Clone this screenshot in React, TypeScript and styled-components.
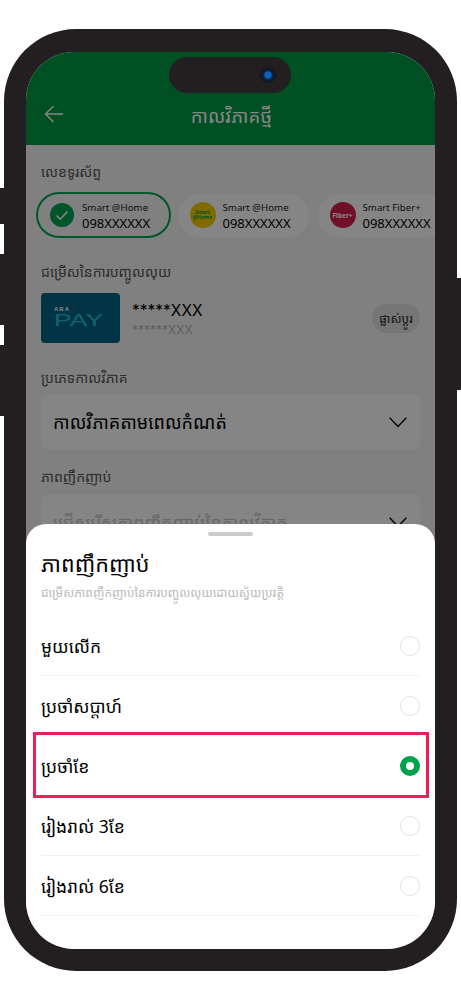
import React from "react";
import styled, { createGlobalStyle } from "styled-components";

const Global = createGlobalStyle`
  html, body {
    margin: 0;
    background: #fff;
  }
  body {
    font-family: "Noto Sans", "Noto Sans Khmer", "DejaVu Sans", sans-serif;
    color: #000;
  }
`;

const plans = [
  { id: "home1", name: "Smart @Home", tone: "#f5cd00", logo: "home" },
  { id: "home2", name: "Smart Fiber+", tone: "#d81e4a", logo: "fiber" },
];

const options = ["មួយលើក", "ប្រចាំសប្តាហ៍", "ប្រចាំខែ", "រៀងរាល់ 3ខែ", "រៀងរាល់ 6ខែ"];

export default function App() {
  return (
    <>
      <Global />
      <Stage>
        <Device>
          <SideKey $side="left" $top={159} $height={36} />
          <SideKey $side="left" $top={225} $height={71} />
          <SideKey $side="left" $top={316} $height={71} />
          <SideKey $side="right" $top={249} $height={112} />
          <Screen>
            <Header>
              <BackIcon width="20" height="18" viewBox="0 0 20 18" fill="none">
                <path d="M19 9H1.5M9.5 1 1.5 9l8 8" stroke="#fff" strokeWidth="1.4" />
              </BackIcon>
              <HeaderTitle>កាលវិភាគថ្មី</HeaderTitle>
            </Header>

            <Content>
              <Label>លេខទូរស័ព្ទ</Label>
              <ChipRow>
                <SelectedChip>
                  <ChipBadge $tone="#00a651" $size={24}>
                    <svg width="14" height="11" viewBox="0 0 14 11" fill="none">
                      <path d="M1.5 5.5 5.2 9.2 12.5 1.5" stroke="#fff" strokeWidth="1.6" />
                    </svg>
                  </ChipBadge>
                  <ChipText>
                    <ChipName>Smart @Home</ChipName>
                    <ChipNumber>098XXXXXX</ChipNumber>
                  </ChipText>
                </SelectedChip>
                <Chip>
                  <ChipBadge $tone={plans[0].tone}>
                    <HomeLogo>
                      Smart
                      <br />
                      @Home
                    </HomeLogo>
                  </ChipBadge>
                  <ChipText>
                    <ChipName>{plans[0].name}</ChipName>
                    <ChipNumber>098XXXXXX</ChipNumber>
                  </ChipText>
                </Chip>
                <Chip>
                  <ChipBadge $tone={plans[1].tone}>
                    <FiberLogo>Fiber+</FiberLogo>
                  </ChipBadge>
                  <ChipText>
                    <ChipName>{plans[1].name}</ChipName>
                    <ChipNumber>098XXXXXX</ChipNumber>
                  </ChipText>
                </Chip>
              </ChipRow>

              <Label $gap={22}>ជម្រើសនៃការបញ្ចូលលុយ</Label>
              <PayRow>
                <AbaCard>
                  <AbaMark>
                    ABA<AbaDot />
                  </AbaMark>
                  <AbaPay>PAY</AbaPay>
                </AbaCard>
                <PayText>
                  <PayMain>*****XXX</PayMain>
                  <PaySub>******XXX</PaySub>
                </PayText>
                <ChangeButton>ផ្លាស់ប្តូរ</ChangeButton>
              </PayRow>

              <Label $gap={23}>ប្រភេទកាលវិភាគ</Label>
              <Select $top={5}>
                <SelectValue>កាលវិភាគតាមពេលកំណត់</SelectValue>
                <Chevron />
              </Select>

              <Label $gap={16}>ភាពញឹកញាប់</Label>
              <Select $top={6}>
                <SelectValue $muted>ជ្រើសរើសភាពញឹកញាប់នៃកាលវិភាគ</SelectValue>
                <Chevron />
              </Select>
            </Content>

            <Scrim />

            <Sheet>
              <Handle />
              <SheetTitle>ភាពញឹកញាប់</SheetTitle>
              <SheetHint>ជម្រើសភាពញឹកញាប់នៃការបញ្ចូលលុយដោយស្វ័យប្រវត្តិ</SheetHint>
              <OptionList>
                {options.map((label, i) => (
                  <Option key={label}>
                    <OptionLabel>{label}</OptionLabel>
                    <Radio $on={i === 2} />
                    {i === 2 && <Highlight />}
                  </Option>
                ))}
              </OptionList>
            </Sheet>

            <Island>
              <Lens />
            </Island>
          </Screen>
        </Device>
      </Stage>
    </>
  );
}

function Chevron() {
  return (
    <svg width="18" height="11" viewBox="0 0 18 11" fill="none">
      <path d="M.7.8 9 9.5 17.3.8" stroke="#000" strokeWidth="1.3" />
    </svg>
  );
}

const Stage = styled.div`
  width: 461px;
  height: 1000px;
  padding: 29px 4px;
  box-sizing: border-box;
  overflow: hidden;
`;

const Device = styled.div`
  position: relative;
  width: 453px;
  height: 942px;
  box-sizing: border-box;
  padding: 23px 22px 22px;
  background: #231f20;
  border-radius: 72px;
`;

const SideKey = styled.div<{ $side: "left" | "right"; $top: number; $height: number }>`
  position: absolute;
  top: ${(p) => p.$top}px;
  ${(p) => p.$side}: -4px;
  width: 4px;
  height: ${(p) => p.$height}px;
  background: #231f20;
`;

const Screen = styled.div`
  position: relative;
  height: 100%;
  overflow: hidden;
  display: flex;
  flex-direction: column;
  background: #f5f5f5;
  border-radius: 48px;
`;

const Island = styled.div`
  position: absolute;
  top: 5px;
  left: 143px;
  width: 122px;
  height: 36px;
  display: flex;
  align-items: center;
  justify-content: flex-end;
  padding-right: 15px;
  box-sizing: border-box;
  background: #231f20;
  border-radius: 18px;
`;

const Lens = styled.div`
  width: 16px;
  height: 16px;
  border-radius: 50%;
  background: radial-gradient(circle at 50% 50%, #0b62c0 0 24%, #0d2038 42%, #12151c 70%, #3c4148 100%);
`;

const Header = styled.header`
  position: relative;
  flex: none;
  height: 93px;
  display: flex;
  align-items: flex-end;
  justify-content: center;
  padding-bottom: 12px;
  box-sizing: border-box;
  background: #009a45;
`;

const BackIcon = styled.svg`
  position: absolute;
  left: 18px;
  top: 53px;
`;

const HeaderTitle = styled.h1`
  margin: 0 0 0 2px;
  font-size: 18.6px;
  font-weight: 400;
  line-height: 34px;
  color: #fff;
`;

const Content = styled.div`
  display: flex;
  flex-direction: column;
  padding: 15px 15px 0;
`;

const Label = styled.div<{ $gap?: number }>`
  margin-top: ${(p) => p.$gap ?? 0}px;
  font-size: 14px;
  line-height: 24px;
  color: #555;
`;

const ChipRow = styled.div`
  display: flex;
  align-items: center;
  gap: 9px;
  margin: 8px -15px 0 -5px;
  overflow: hidden;
`;

const Chip = styled.div`
  flex: none;
  display: flex;
  align-items: center;
  gap: 7px;
  width: 131px;
  height: 43px;
  padding-left: 11.5px;
  box-sizing: border-box;
  background: #fff;
  border-radius: 22px;
`;

const SelectedChip = styled(Chip)`
  width: 135px;
  height: 46px;
  margin-right: -2px;
  padding-left: 12px;
  gap: 8px;
  background: #f5f5f5;
  border: 2px solid #00a651;
  border-radius: 23px;
`;

const ChipBadge = styled.div<{ $tone: string; $size?: number }>`
  flex: none;
  width: ${(p) => p.$size ?? 26}px;
  height: ${(p) => p.$size ?? 26}px;
  display: flex;
  align-items: center;
  justify-content: center;
  background: ${(p) => p.$tone};
  border-radius: 50%;
  overflow: hidden;
`;

const HomeLogo = styled.span`
  font-size: 5px;
  line-height: 5px;
  font-weight: 700;
  color: #0a9a46;
  text-align: center;
`;

const FiberLogo = styled.span`
  font-size: 6.5px;
  font-weight: 700;
  color: #fff;
`;

const ChipText = styled.div`
  display: flex;
  flex-direction: column;
  padding-top: 1px;
  white-space: nowrap;
`;

const ChipName = styled.span`
  font-size: 9.7px;
  line-height: 15px;
  color: #222;
`;

const ChipNumber = styled.span`
  font-size: 13px;
  line-height: 17px;
  color: #000;
`;

const PayRow = styled.div`
  display: flex;
  align-items: center;
  margin-top: 9px;
`;

const AbaCard = styled.div`
  flex: none;
  width: 79px;
  height: 50px;
  display: flex;
  flex-direction: column;
  padding: 13px 0 0 13px;
  box-sizing: border-box;
  background: #006280;
  border-radius: 4px;
  overflow: hidden;
`;

const AbaMark = styled.div`
  position: relative;
  width: 20px;
  font-family: "Liberation Sans", sans-serif;
  font-size: 6px;
  font-weight: 700;
  line-height: 7px;
  letter-spacing: 1px;
  color: #fff;
`;

const AbaDot = styled.span`
  position: absolute;
  top: 0;
  right: 0;
  width: 1.5px;
  height: 1.5px;
  background: #ff2a3c;
  border-radius: 50%;
`;

const AbaPay = styled.div`
  font-family: "Liberation Sans", sans-serif;
  font-size: 17px;
  font-weight: 400;
  line-height: 16px;
  color: #1cc4cc;
  transform: scaleX(1.56);
  transform-origin: left;
`;

const PayText = styled.div`
  flex: 1;
  display: flex;
  flex-direction: column;
  margin-left: 12px;
  font-family: Inter, sans-serif;
`;

const PayMain = styled.span`
  font-size: 15.5px;
  line-height: 22px;
`;

const PaySub = styled.span`
  font-size: 12px;
  line-height: 15px;
  color: #b5b5b5;
`;

const ChangeButton = styled.div`
  flex: none;
  width: 48px;
  height: 29px;
  display: flex;
  align-items: center;
  justify-content: center;
  font-size: 12px;
  color: #222;
  background: #e2e2e2;
  border-radius: 15px;
`;

const Select = styled.div<{ $top: number }>`
  flex: none;
  height: 54px;
  margin-top: ${(p) => p.$top}px;
  padding: 0 13px 0 12px;
  display: flex;
  align-items: center;
  justify-content: space-between;
  box-sizing: border-box;
  background: #fff;
  border-radius: 6px;
`;

const SelectValue = styled.span<{ $muted?: boolean }>`
  font-size: ${(p) => (p.$muted ? 17.6 : 18)}px;
  color: ${(p) => (p.$muted ? "#c8c8c8" : "#000")};
`;

const Scrim = styled.div`
  position: absolute;
  inset: 0;
  background: rgba(0, 0, 0, 0.48);
`;

const Sheet = styled.section`
  position: absolute;
  left: 0;
  right: 0;
  bottom: 0;
  height: 425px;
  padding: 8px 15px 0;
  box-sizing: border-box;
  display: flex;
  flex-direction: column;
  background: #fff;
  border-radius: 20px 20px 0 0;
`;

const Handle = styled.div`
  align-self: center;
  width: 45px;
  height: 4px;
  background: #ccc;
  border-radius: 2px;
`;

const SheetTitle = styled.h2`
  margin: 10px 0 0;
  font-size: 21.6px;
  font-weight: 400;
  line-height: 36px;
`;

const SheetHint = styled.p`
  margin: 1px 0 0;
  font-size: 12px;
  line-height: 20px;
  white-space: nowrap;
  color: #b8b8b8;
`;

const OptionList = styled.div`
  display: flex;
  flex-direction: column;
  margin-top: 13px;
`;

const Option = styled.div`
  position: relative;
  height: 60px;
  display: flex;
  align-items: center;
  justify-content: space-between;
  box-sizing: border-box;
  border-bottom: 1px solid #f2f2f2;
`;

const OptionLabel = styled.span`
  font-size: 17.5px;
`;

const Radio = styled.span<{ $on: boolean }>`
  width: 20px;
  height: 20px;
  box-sizing: border-box;
  border-radius: 50%;
  border: ${(p) => (p.$on ? "6px solid #00a14b" : "1px solid #e5e5e5")};
`;

const Highlight = styled.div`
  position: absolute;
  top: -4px;
  bottom: -3px;
  left: -8px;
  right: -9px;
  border: 3px solid #ee1e5a;
`;
